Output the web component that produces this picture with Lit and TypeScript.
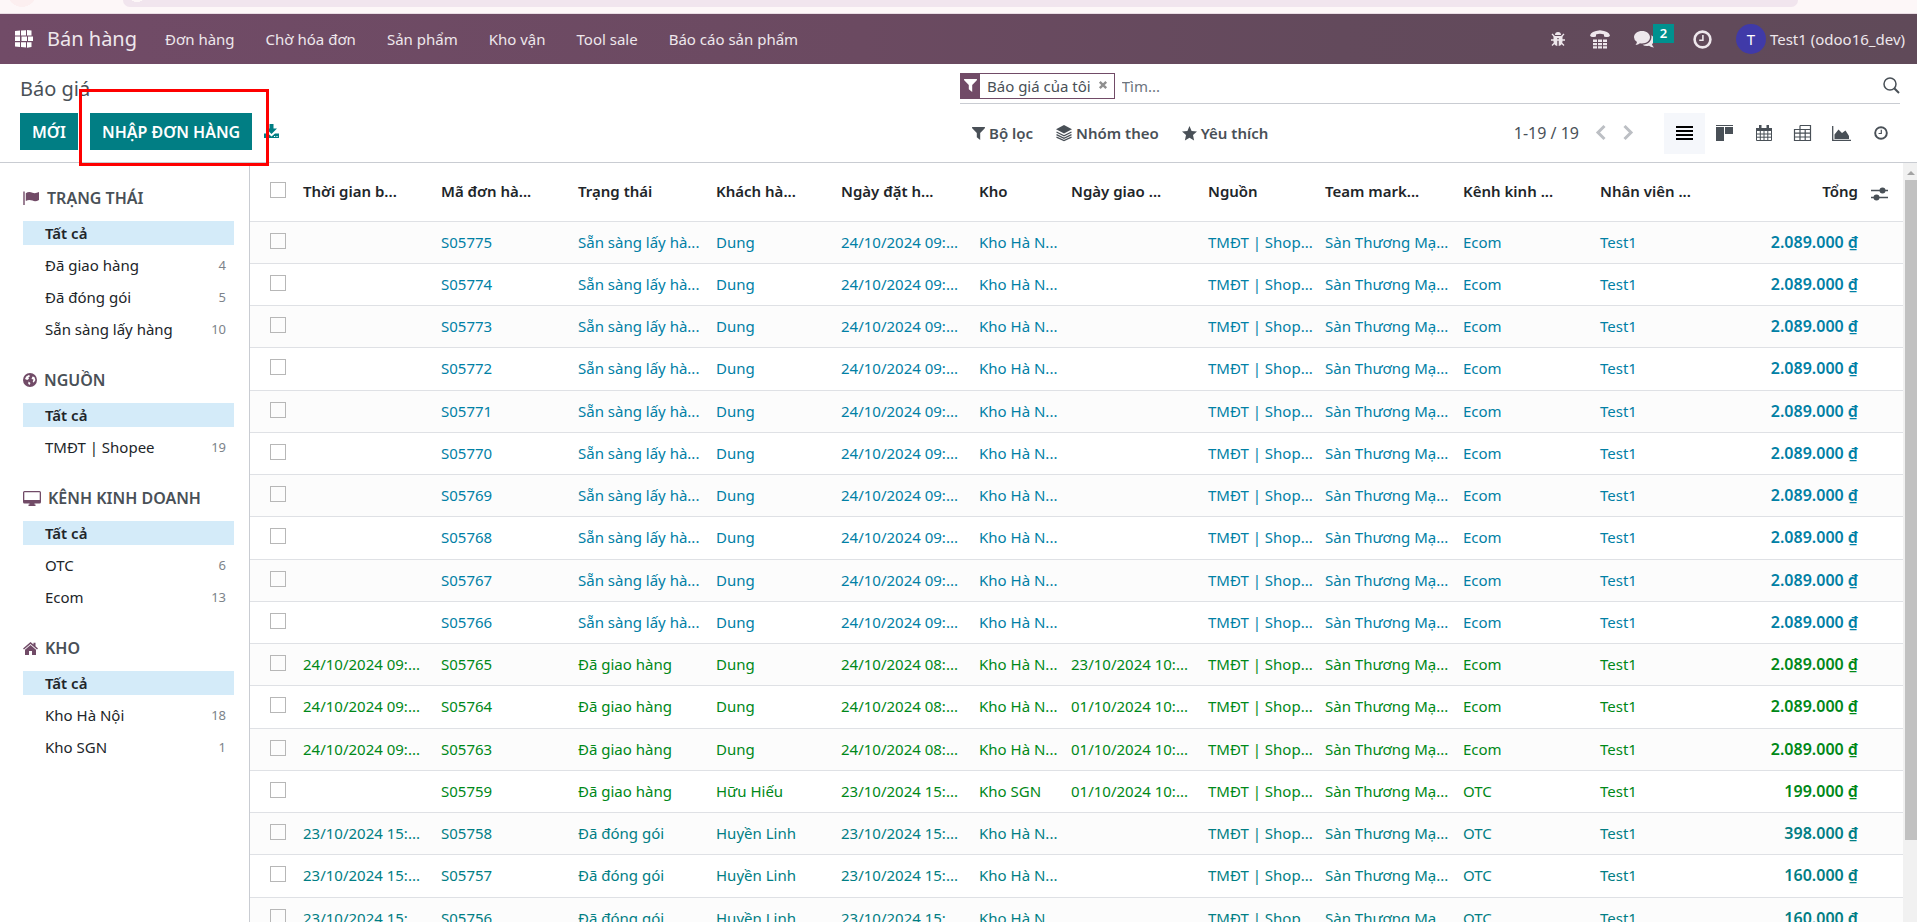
import { LitElement, html, css, svg, nothing, TemplateResult } from "lit";
import { customElement } from "lit/decorators.js";

type Tone = "info" | "success" | "teal";
interface Order {
  tone: Tone;
  time: string;
  code: string;
  status: string;
  customer: string;
  ordered: string;
  stock: string;
  delivery: string;
  channel: string;
  total: string;
}

const info = (code: string): Order => ({
  tone: "info", time: "", code, status: "Sẵn sàng lấy hà...", customer: "Dung",
  ordered: "24/10/2024 09:...", stock: "Kho Hà N...", delivery: "", channel: "Ecom", total: "2.089.000 ₫",
});
const done = (code: string, delivery: string): Order => ({
  tone: "success", time: "24/10/2024 09:...", code, status: "Đã giao hàng", customer: "Dung",
  ordered: "24/10/2024 08:...", stock: "Kho Hà N...", delivery, channel: "Ecom", total: "2.089.000 ₫",
});
const packed = (code: string, total: string): Order => ({
  tone: "teal", time: "23/10/2024 15:...", code, status: "Đã đóng gói", customer: "Huyền Linh",
  ordered: "23/10/2024 15:...", stock: "Kho Hà N...", delivery: "", channel: "OTC", total,
});

const ORDERS: Order[] = [
  ...["S05775", "S05774", "S05773", "S05772", "S05771", "S05770", "S05769", "S05768", "S05767", "S05766"].map(info),
  done("S05765", "23/10/2024 10:..."),
  done("S05764", "01/10/2024 10:..."),
  done("S05763", "01/10/2024 10:..."),
  {
    tone: "success", time: "", code: "S05759", status: "Đã giao hàng", customer: "Hữu Hiếu",
    ordered: "23/10/2024 15:...", stock: "Kho SGN", delivery: "01/10/2024 10:...", channel: "OTC", total: "199.000 ₫",
  },
  packed("S05758", "398.000 ₫"),
  packed("S05757", "160.000 ₫"),
  packed("S05756", "160.000 ₫"),
];

const COLUMNS = [
  "Thời gian b...", "Mã đơn hà...", "Trạng thái", "Khách hà...", "Ngày đặt h...", "Kho",
  "Ngày giao ...", "Nguồn", "Team mark...", "Kênh kinh ...", "Nhân viên ...",
];

const icon = (w: number, h: number, box: string, body: unknown) =>
  html`<svg width=${w} height=${h} viewBox=${box} fill="currentColor" aria-hidden="true">${body}</svg>`;

const FUNNEL = svg`<path d="M0.3 0H12.7Q13.3 0.6 12.8 1.2L8.2 6V13L4.8 10.3V6L0.2 1.2Q-0.3 0.6 0.3 0Z"/>`;
const CLOCK = svg`<circle cx="9.500" cy="9.500" r="7.900" fill="none" stroke="currentColor" stroke-width="2.600"/><path d="M9.900 5V10.200H6.200" fill="none" stroke="currentColor" stroke-width="1.600"/>`;

const ICONS: Record<string, TemplateResult> = {
  apps: icon(18, 18, "0 0 18 18", svg`<path d="M0 1L5 .6V5.400H0ZM6 .6L11 .2V5.400H6ZM12 0L16.500 .4V5.400H12ZM0 6.500H5V11H0ZM6.500 6.500H12V11H6.500ZM13 6.500H18V11H13ZM0 12.200H5V17L0 16.600ZM6 12.200H11V17.400L6 17ZM12 12.200H16.500V17L12 17.800Z"/>`),
  bug: icon(16, 16, "0 0 16 16", svg`<path d="M5 4a3 3 0 0 1 6 0ZM3.500 5H12.500V10.500Q12 14.500 8.700 15V7H7.300V15Q4 14.500 3.500 10.500Z"/><path d="M1 9H15M2 3L5 6M14 3L11 6M2 14.500L5 11.500M14 14.500L11 11.500" stroke="currentColor" stroke-width="1.300"/>`),
  phone: icon(20, 19, "0 0 20 19", svg`<path d="M0 5.500Q1 1 10 .2Q19 1 20 5.500Q19 8 14 6.500V4.500Q10 3 6 4.500V6.500Q1 8 0 5.500ZM3 9.500H7V12H3ZM8 9.500H12V12H8ZM13 9.500H17V12H13ZM3 13H7V15.200H3ZM8 13H12V15.200H8ZM13 13H17V15.200H13ZM3 16.200H7V18.500H3ZM8 16.200H12V18.500H8ZM13 16.200H17V18.500H13Z"/>`),
  chat: icon(21, 17, "0 0 21 17", svg`<path d="M8 0C12.500 0 16 2.700 16 6.200S12.500 12.400 8 12.400Q7 12.400 6 12.200Q4.200 13.800 1.500 14Q2.700 12.600 3 11Q0 9.300 0 6.200C0 2.700 3.500 0 8 0Z"/><path d="M17.300 4.200Q20.500 5.800 20.500 8.800Q20.500 11.500 18 13.300Q18.500 15 20 16.500Q17 16.500 15 14.800Q11 15.500 8.500 13.800C13.500 13.600 18.500 10 17.300 4.200Z"/>`),
  clock: icon(19, 19, "0 0 19 19", CLOCK),
  clockSmall: icon(14, 14, "0 0 19 19", CLOCK),
  download: icon(15, 15, "0 0 15 15", svg`<path d="M5.500 0H9.500V4.500H13L7.500 10L2 4.500H5.500ZM0 9.500H4L7.500 12.500L11 9.500H15V14H0ZM10 12V13H11.200V12ZM12.400 12V13H13.600V12Z" fill-rule="evenodd"/>`),
  funnel: icon(13, 13, "0 0 13 13", FUNNEL),
  layers: icon(16, 16, "0 0 16 16", svg`<path d="M8 0L16 4.200L8 8.400L0 4.200Z"/><path d="M.5 7L8 10.800L15.500 7M.5 9.600L8 13.300L15.500 9.600M.5 12.200L8 15.600L15.500 12.200" fill="none" stroke="currentColor" stroke-width="1.300"/>`),
  star: icon(15, 15, "0 0 15 15", svg`<path d="M7.500 0L9.600 4.900L15 5.500L11 9.100L12.100 14.400L7.500 11.700L2.900 14.400L4 9.100L0 5.500L5.400 4.900Z"/>`),
  search: icon(17, 17, "0 0 17 17", svg`<g fill="none" stroke="currentColor"><circle cx="7" cy="7" r="6" stroke-width="1.500"/><path d="M11.200 11.200L16 16" stroke-width="2"/></g>`),
  close: icon(8, 8, "0 0 8 8", svg`<path d="M.8 .8L7.200 7.200M7.200 .8L.8 7.200" stroke="currentColor" stroke-width="2.400"/>`),
  prev: icon(10, 15, "0 0 10 15", svg`<path d="M8.500 1L2 7.500L8.500 14" fill="none" stroke="currentColor" stroke-width="3"/>`),
  next: icon(10, 15, "0 0 10 15", svg`<path d="M1.500 1L8 7.500L1.500 14" fill="none" stroke="currentColor" stroke-width="3"/>`),
  list: icon(17, 14, "0 0 17 14", svg`<path d="M0 0H17V2H0ZM0 4H17V6H0ZM0 8H17V10H0ZM0 12H17V14H0Z"/>`),
  kanban: icon(17, 16, "0 0 17 16", svg`<path d="M0 0H17V1H0ZM0 2H8V16H0ZM9 2H17V9H9Z"/>`),
  calendar: icon(16, 16, "0 0 16 16", svg`<path d="M.5 3.500H15.500V15.500H.5ZM.5 9H15.500M.5 12.200H15.500M4.300 6V15.500M8 6V15.500M11.800 6V15.500" fill="none" stroke="currentColor"/><path d="M0 3H16V6H0ZM3 0H5.500V4H3ZM10.500 0H13V4H10.500Z"/>`),
  pivot: icon(17, 16, "0 0 17 16", svg`<path d="M6 .5H16.500V15.500H.5V4.500H16.500M6 .5V15.500M.5 8.200H16.500M.5 12H16.500M11.200 4.500V15.500" fill="none" stroke="currentColor" stroke-width="1.200"/>`),
  graph: icon(19, 15, "0 0 19 15", svg`<path d="M.7 0V14.300H19" fill="none" stroke="currentColor" stroke-width="1.300"/><path d="M2.500 13V8.500L6.500 3.500L10 7L13.500 4.500L17 10V13Z"/>`),
  sliders: icon(17, 14, "0 0 17 14", svg`<path d="M0 3.500H17M0 10.500H17" stroke="currentColor" stroke-width="1.500"/><circle cx="11.500" cy="3.500" r="3"/><circle cx="5.500" cy="10.500" r="3"/>`),
  flag: icon(17, 14, "0 0 17 14", svg`<path d="M.3 .5H1.700V14H.3Z"/><path d="M2.800 2.200Q6 0 9.500 1.800Q12.500 2.800 16 1V9Q12.500 11 9.500 9.600Q6 8.200 2.800 10Z"/>`),
  globe: icon(14, 14, "0 0 14 14", svg`<path d="M7 0A7 7 0 1 1 7 14A7 7 0 1 1 7 0ZM3.200 3.500L2 6L4.200 7L6 5.800L5.400 4.600L7.200 3L5.800 2ZM9.500 3.500L8.500 6L10.500 6.500L9.700 9L10.800 9.500L12.400 7L11.400 4ZM5.500 8.500L7.500 10L6.500 12L5.200 10.800Z" fill-rule="evenodd"/>`),
  desktop: icon(18, 15, "0 0 18 15", svg`<path d="M1.500 0H16.500Q18 0 18 1.500V11Q18 12.500 16.500 12.500H11.500V13.500H12.500V15H5.500V13.500H6.500V12.500H1.500Q0 12.500 0 11V1.500Q0 0 1.500 0ZM1.300 1.300V9H16.700V1.300Z" fill-rule="evenodd"/>`),
  home: icon(15, 13, "0 0 15 13", svg`<path d="M7.500 0L10.500 2.600V.8H12.500V4.300L15 6.500L14 7.500L7.500 2L1 7.500L0 6.500ZM7.500 3L13 7.700V13H9V9H6V13H2V7.700Z"/>`),
  up: icon(8, 4, "0 0 8 4", svg`<path d="M0 4L4 0L8 4Z"/>`),
};

const SECTIONS: { icon: string; title: string; items: [string, string][] }[] = [
  { icon: "flag", title: "TRẠNG THÁI", items: [["Đã giao hàng", "4"], ["Đã đóng gói", "5"], ["Sẵn sàng lấy hàng", "10"]] },
  { icon: "globe", title: "NGUỒN", items: [["TMĐT | Shopee", "19"]] },
  { icon: "desktop", title: "KÊNH KINH DOANH", items: [["OTC", "6"], ["Ecom", "13"]] },
  { icon: "home", title: "KHO", items: [["Kho Hà Nội", "18"], ["Kho SGN", "1"]] },
];

const VIEWS: [string, string][] = [
  ["list", "Danh sách"], ["kanban", "Kanban"], ["calendar", "Lịch"], ["pivot", "Pivot"], ["graph", "Đồ thị"], ["clockSmall", "Hoạt động"],
];

const base = css`
  * { box-sizing: border-box; }
  svg { display: block; flex: none; overflow: visible; }
  button { font: inherit; color: inherit; background: none; border: 0; padding: 0; margin: 0; border-radius: 0; display: flex; align-items: center; }
  a { color: inherit; text-decoration: none; }
`;

@customElement("sale-navbar")
export class SaleNavbar extends LitElement {
  static styles = [base, css`
    :host { display: block; color: #eee7ec; }
    .browser { height: 14px; background: radial-gradient(circle 15px at 22px -8px, #fceff0 98%, transparent) #fdf7f8; border-bottom: 1px solid #e9dde4; overflow: hidden; padding: 0 119px 0 123px; }
    .address { height: 7px; background: radial-gradient(circle 11px at 14px -9px, #fdf7f8 98%, transparent) #f1e5ee; border-radius: 0 0 16px 16px; }
    .bar { height: 50px; display: flex; align-items: center; background: linear-gradient(90deg, #714b67 0%, #6b4a61 45%, #634a5c 70%, #604a59 100%); padding: 0 12px 0 15px; }
    .brand { font-size: 20px; margin: 0 28px 0 14px; line-height: 52px; }
    .apps { color: #fff; }
    nav { display: flex; gap: 31px; font-size: 15px; line-height: 52px; }
    .tray { margin-left: auto; display: flex; align-items: center; font-size: 15px; }
    .tray button { margin-right: 24px; }
    .tray .chat { position: relative; margin-right: 38px; }
    .badge { position: absolute; left: 19px; top: -7px; width: 21px; height: 19px; background: #00918f; color: #fff; font-size: 13px; line-height: 18px; font-weight: 600; text-align: center; }
    .tray .user { margin: 0; gap: 4px; }
    .avatar { width: 30px; height: 30px; border-radius: 50%; background: #403aa8; color: #fff; display: grid; place-items: center; }
  `];
  render() {
    return html`
      <div class="browser"><div class="address"></div></div>
      <header class="bar">
        <button class="apps" aria-label="Ứng dụng">${ICONS.apps}</button>
        <a class="brand" href="#">Bán hàng</a>
        <nav>${["Đơn hàng", "Chờ hóa đơn", "Sản phẩm", "Kho vận", "Tool sale", "Báo cáo sản phẩm"].map((t) => html`<a href="#">${t}</a>`)}</nav>
        <div class="tray">
          <button aria-label="Gỡ lỗi">${ICONS.bug}</button>
          <button aria-label="Điện thoại">${ICONS.phone}</button>
          <button class="chat" aria-label="Tin nhắn">${ICONS.chat}<span class="badge">2</span></button>
          <button aria-label="Hoạt động">${ICONS.clock}</button>
          <button class="user"><span class="avatar">T</span>Test1 (odoo16_dev)</button>
        </div>
      </header>`;
  }
}

@customElement("sale-control-panel")
export class SaleControlPanel extends LitElement {
  static styles = [base, css`
    :host { display: block; color: #495057; border-bottom: 1px solid #c9ccd2; }
    .panel { display: grid; grid-template-columns: 1fr 1fr; height: 98px; padding: 0 17px 0 20px; }
    .left { position: relative; }
    h1 { margin: 12px 0 0; font-size: 20px; font-weight: 400; line-height: 26px; }
    .actions { display: flex; gap: 12px; margin-top: 11px; align-items: center; }
    .primary { height: 37px; padding: 0 12px; background: #017e84; color: #fff; font-size: 16px; font-weight: 600; }
    .export { color: #017e84; }
    .callout { position: absolute; left: 59px; top: 25px; width: 190px; height: 77px; border: 3px solid #fe0000; pointer-events: none; }
    .search { height: 40px; padding-top: 4px; border-bottom: 1px solid #c9ccd2; display: flex; align-items: center; }
    .facet { display: flex; align-items: center; height: 26px; border: 1px solid #714b67; font-size: 15px; line-height: 26px; }
    .facet i { width: 19px; height: 26px; background: #714b67; color: #fff; display: grid; place-items: center; margin-right: 7px; }
    .facet button { color: #8f8f8f; margin: 0 7px 2px 8px; }
    input { flex: 1; border: 0; outline: 0; padding: 0 7px; font: inherit; font-size: 15px; color: inherit; background: none; }
    input::placeholder { color: #6c757d; opacity: 1; }
    .tools { display: flex; align-items: center; height: 58px; font-size: 15px; padding-left: 12px; }
    .filters { display: flex; gap: 23px; font-weight: 600; }
    .filters button { gap: 4px; }
    .pager { margin-left: auto; display: flex; align-items: center; gap: 17px; margin-right: 31px; font-size: 16px; }
    .pager button { color: #bcbfc4; margin-bottom: 2px; }
    .views { display: flex; }
    .views button { width: 39px; height: 41px; justify-content: center; }
    .views .on { width: 41px; background: #f5f7fb; color: #000; }
  `];
  render() {
    return html`
      <div class="panel">
        <div class="left">
          <h1>Báo giá</h1>
          <div class="actions">
            <button class="primary">MỚI</button>
            <button class="primary">NHẬP ĐƠN HÀNG</button>
            <button class="export" aria-label="Xuất">${ICONS.download}</button>
          </div>
          <div class="callout"></div>
        </div>
        <div>
          <div class="search">
            <span class="facet"><i>${ICONS.funnel}</i>Báo giá của tôi<button aria-label="Xóa">${ICONS.close}</button></span>
            <input type="text" placeholder="Tìm..." aria-label="Tìm" />
            <button aria-label="Tìm kiếm">${ICONS.search}</button>
          </div>
          <div class="tools">
            <div class="filters">
              <button>${ICONS.funnel}Bộ lọc</button>
              <button>${ICONS.layers}Nhóm theo</button>
              <button>${ICONS.star}Yêu thích</button>
            </div>
            <div class="pager"><span>1-19 / 19</span><button aria-label="Trước">${ICONS.prev}</button><button aria-label="Sau">${ICONS.next}</button></div>
            <div class="views">${VIEWS.map(([n, label], i) => html`<button class=${i === 0 ? "on" : ""} aria-label=${label}>${ICONS[n]}</button>`)}</div>
          </div>
        </div>
      </div>`;
  }
}

@customElement("sale-sidebar")
export class SaleSidebar extends LitElement {
  static styles = [base, css`
    :host { display: block; border-right: 1px solid #c9ccd2; padding: 0 15px 0 23px; font-size: 15px; color: #212529; }
    h2 { display: flex; align-items: center; gap: 7px; margin: 23px 0 11px; font-size: 16px; line-height: 24px; font-weight: 600; color: #495057; }
    h2 svg { color: #714b67; }
    ul { list-style: none; margin: 0; padding: 0; }
    li { display: flex; align-items: center; justify-content: space-between; height: 32px; padding: 0 8px 0 22px; }
    .all { height: 24px; margin-bottom: 4px; background: #d4ebf9; font-weight: 600; }
    .count { font-size: 13px; color: #7c838a; }
  `];
  render() {
    return html`${SECTIONS.map((s) => html`
      <section>
        <h2>${ICONS[s.icon]}${s.title}</h2>
        <ul>
          <li class="all"><a href="#">Tất cả</a></li>
          ${s.items.map(([name, n]) => html`<li><a href="#">${name}</a><span class="count">${n}</span></li>`)}
        </ul>
      </section>`)}`;
  }
}

@customElement("sale-list")
export class SaleList extends LitElement {
  static styles = [base, css`
    :host { display: flex; min-width: 0; overflow: hidden; }
    .scroll { flex: 1; min-width: 0; overflow: hidden; }
    table { width: 100%; table-layout: fixed; border-collapse: separate; border-spacing: 0; font-size: 15px; line-height: 22px; }
    th, td { padding: 0 8px 2px; border-bottom: 1px solid #dfe1e5; text-align: left; white-space: nowrap; overflow: hidden; }
    th { height: 59px; font-weight: 600; color: #212529; }
    td { height: 42px; }
    tr:nth-child(4n) td { height: 43px; }
    tbody tr:nth-child(odd) { background: #fcfcfc; }
    .pick { padding: 0 0 2px 20px; }
    .w45 { width: 45px; } .w92 { width: 92px; } .w117 { width: 117px; } .w125 { width: 125px; }
    .w137 { width: 137px; } .w138 { width: 138px; } .w37 { width: 37px; }
    .num { text-align: right; }
    td.num { font-weight: 600; font-size: 16px; }
    .opt { padding: 0; }
    .opt button { margin: 3px 0 0 5px; color: #495057; }
    .info { color: #0180a5; } .success { color: #008818; } .teal { color: #017e84; }
    input { appearance: none; display: block; width: 16px; height: 16px; margin: 0 0 2px; border: 1px solid #b7b7b7; background: transparent; }
    .track { width: 14px; background: #f1f1f1; display: flex; flex-direction: column; align-items: flex-end; color: #a3a3a3; }
    .arrow { height: 17px; padding: 8px 2px 0 0; }
    .thumb { width: 12px; height: 87%; background: #c1c1c1; }
  `];
  render() {
    const widths = ["w45", "w138", "w137", "w138", "w125", "w138", "w92", "w137", "w117", "w138", "w137", "w137"];
    return html`
      <div class="scroll">
        <table>
          <thead>
            <tr>
              <th class="pick w45"><input type="checkbox" aria-label="Chọn tất cả" /></th>
              ${COLUMNS.map((c, i) => html`<th class=${widths[i + 1]}>${c}</th>`)}
              <th class="num w137">Tổng</th>
              <th class="opt w37"><button aria-label="Cột">${ICONS.sliders}</button></th>
            </tr>
          </thead>
          <tbody>
            ${ORDERS.map((o) => html`
              <tr class=${o.tone}>
                <td class="pick"><input type="checkbox" aria-label=${o.code} /></td>
                <td>${o.time || nothing}</td><td>${o.code}</td><td>${o.status}</td><td>${o.customer}</td>
                <td>${o.ordered}</td><td>${o.stock}</td><td>${o.delivery || nothing}</td><td>TMĐT | Shop...</td>
                <td>Sàn Thương Mạ...</td><td>${o.channel}</td><td>Test1</td>
                <td class="num">${o.total}</td><td class="opt"></td>
              </tr>`)}
          </tbody>
        </table>
      </div>
      <div class="track" aria-hidden="true"><div class="arrow">${ICONS.up}</div><div class="thumb"></div></div>`;
  }
}

@customElement("app-root")
export class AppRoot extends LitElement {
  static styles = css`
    :host { display: flex; flex-direction: column; height: 100vh; overflow: hidden; background: #fff; font-family: "Noto Sans", "Open Sans", sans-serif; }
    main { flex: 1; min-height: 0; display: grid; grid-template-columns: 250px minmax(0, 1fr); grid-template-rows: minmax(0, 1fr); }
  `;
  render() {
    return html`
      <sale-navbar></sale-navbar>
      <sale-control-panel></sale-control-panel>
      <main><sale-sidebar></sale-sidebar><sale-list></sale-list></main>`;
  }
}
